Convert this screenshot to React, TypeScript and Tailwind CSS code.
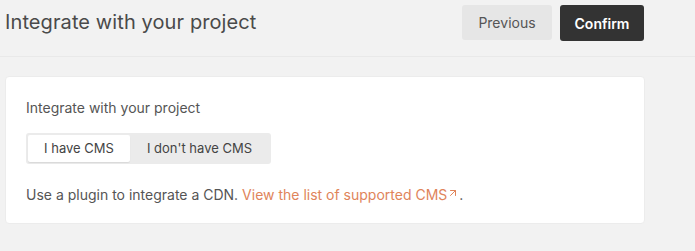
import { ArrowUpRight } from "lucide-react";

const App = () => {
  return (
    <div className="min-h-[251px] w-[695px] bg-[#f2f2f2] font-['Inter',sans-serif]">
      {/* HEADER */}
      <div className="flex h-[57px] items-start justify-between border-b border-[#e9e9e9] pl-[5px] pr-[51px] pt-[5px]">
        <h1 className="mt-[2px] text-[20px] leading-[30px] tracking-[0.1px] text-[#4a4a4a]">
          Integrate with your project
        </h1>

        <div className="flex gap-2">
          <button className="h-[35px] w-[90px] rounded-[3px] bg-[#e6e6e6] text-[14px] text-[#555]">
            Previous
          </button>
          <button className="h-[36px] w-[84px] rounded-[3px] bg-[#333333] text-[14px] font-semibold text-white">
            Confirm
          </button>
        </div>
      </div>

      {/* CARD */}
      <div className="px-[5px] pr-[50px] pt-[19px]">
        <div className="h-[148px] rounded-[4px] border border-[#ececec] bg-white px-[20px] pt-[21px]">
          <p className="text-[14px] leading-[20px] text-[#555]">
            Integrate with your project
          </p>

          <div className="mt-[15px] flex h-[31px] w-[245px] rounded-[3px] bg-[#ebebeb] p-[2px]">
            <button className="w-[102px] rounded-[2px] bg-white text-[13px] text-[#444] shadow-[0_1px_1px_rgba(0,0,0,0.08)]">
              I have CMS
            </button>
            <button className="flex-1 text-[13px] text-[#444]">
              I don't have CMS
            </button>
          </div>

          <p className="mt-[21px] flex items-center text-[14px] leading-[20px] text-[#555]">
            Use a plugin to integrate a CDN.&nbsp;
            <a className="flex items-center text-[#e0845a]">
              View the list of supported CMS
              <ArrowUpRight className="mb-[4px] h-[12px] w-[12px]" strokeWidth={2} />
            </a>
            .
          </p>
        </div>
      </div>
    </div>
  );
};

export default App;
